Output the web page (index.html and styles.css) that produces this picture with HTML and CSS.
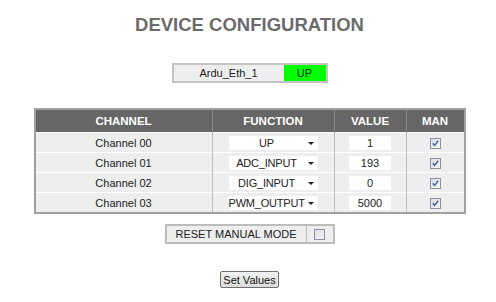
FILE: index.html
```html
<!DOCTYPE html>
<html lang="en">
<head>
    <meta charset="UTF-8">
    <title>Device Configuration</title>
    <link rel="stylesheet" href="styles.css">
</head>
<body>
    <h1 class="title">DEVICE CONFIGURATION</h1>

    <table class="device">
        <tr>
            <td class="device-name">Ardu_Eth_1</td>
            <td class="device-state">UP</td>
        </tr>
    </table>

    <table class="channels">
        <tr>
            <th class="col-channel">CHANNEL</th>
            <th class="col-function">FUNCTION</th>
            <th class="col-value">VALUE</th>
            <th class="col-man">MAN</th>
        </tr>
        <tr>
            <td>Channel 00</td>
            <td><span class="select">UP</span></td>
            <td><span class="value">1</span></td>
            <td><span class="check"><svg viewBox="0 0 9 9"><path d="M1.8 4.2 L3.6 6.4 L7.2 1.8" /></svg></span></td>
        </tr>
        <tr>
            <td>Channel 01</td>
            <td><span class="select">ADC_INPUT</span></td>
            <td><span class="value">193</span></td>
            <td><span class="check"><svg viewBox="0 0 9 9"><path d="M1.8 4.2 L3.6 6.4 L7.2 1.8" /></svg></span></td>
        </tr>
        <tr>
            <td>Channel 02</td>
            <td><span class="select">DIG_INPUT</span></td>
            <td><span class="value">0</span></td>
            <td><span class="check"><svg viewBox="0 0 9 9"><path d="M1.8 4.2 L3.6 6.4 L7.2 1.8" /></svg></span></td>
        </tr>
        <tr>
            <td>Channel 03</td>
            <td><span class="select">PWM_OUTPUT</span></td>
            <td><span class="value">5000</span></td>
            <td><span class="check"><svg viewBox="0 0 9 9"><path d="M1.8 4.2 L3.6 6.4 L7.2 1.8" /></svg></span></td>
        </tr>
    </table>

    <table class="reset">
        <tr>
            <td class="reset-label">RESET MANUAL MODE</td>
            <td class="reset-box"><span class="check"></span></td>
        </tr>
    </table>

    <div class="actions">
        <button class="set-btn">Set Values</button>
    </div>
</body>
</html>
```

FILE: styles.css
```css
body, html {
    margin: 0;
    padding: 0;
    background: #fff;
    font-family: 'Liberation Sans', Arial, sans-serif;
    font-size: 11px;
    color: #222;
}

body {
    padding-left: 3px;
}

.title {
    margin: 14px 0 0;
    text-align: center;
    font-size: 18.5px;
    font-weight: bold;
    color: #6b6b6b;
    line-height: 22px;
}

table {
    border-collapse: collapse;
    margin: 0 auto;
}

.device {
    margin-top: 27px;
    width: 156px;
    border: 2px solid #c4c4c4;
}

.device td {
    height: 16px;
    padding: 0;
    text-align: center;
}

.device-name {
    background: #eeeeee;
    width: 110px;
}

.device-state {
    background: #00ff00;
}

.channels {
    margin-top: 25px;
    width: 432px;
    border: 2px solid #a0a0a0;
}

.channels th {
    background: #666666;
    color: #fff;
    font-size: 11.5px;
    font-weight: bold;
    height: 22px;
    padding: 0;
    border-right: 1px solid #888;
}

.channels td {
    background: #eeeeee;
    height: 19px;
    padding: 0;
    text-align: center;
    border-top: 1px solid #fff;
    border-right: 1px solid #bdbdbd;
}

.col-channel { width: 176px; }
.col-function { width: 121px; }
.col-value { width: 71px; }

.select {
    display: inline-block;
    position: relative;
    width: 89px;
    height: 14px;
    line-height: 14px;
    background: #fff;
    padding-right: 13px;
    box-sizing: border-box;
    vertical-align: middle;
    letter-spacing: -0.2px;
}

.select::after {
    content: '';
    position: absolute;
    right: 4px;
    top: 6px;
    border-left: 3px solid transparent;
    border-right: 3px solid transparent;
    border-top: 3px solid #222;
}

.value {
    display: inline-block;
    width: 42px;
    height: 14px;
    line-height: 14px;
    background: #fff;
    vertical-align: middle;
}

.check {
    display: inline-block;
    width: 9px;
    height: 9px;
    border: 1px solid #8f8f9d;
    background: linear-gradient(135deg, #dcdcdc, #f7f7f7);
    vertical-align: middle;
}

.check svg {
    display: block;
    width: 9px;
    height: 9px;
}

.check path {
    fill: none;
    stroke: #4a5ea8;
    stroke-width: 1.4;
}

.reset {
    margin-top: 10px;
    border: 2px solid #bdbdbd;
}

.reset td {
    background: #eeeeee;
    height: 16px;
    padding: 0;
    text-align: center;
}

.reset-label {
    width: 139px;
    border-right: 1px solid #bdbdbd;
}

.reset-box {
    width: 26px;
}

.actions {
    margin-top: 27px;
    text-align: center;
}

.set-btn {
    font-family: 'Liberation Sans', Arial, sans-serif;
    font-size: 11px;
    color: #111;
    height: 17px;
    padding: 0 2px;
    border: 1px solid #707070;
    border-radius: 2px;
    background: linear-gradient(#f2f2f2, #dcdcdc);
}
```
